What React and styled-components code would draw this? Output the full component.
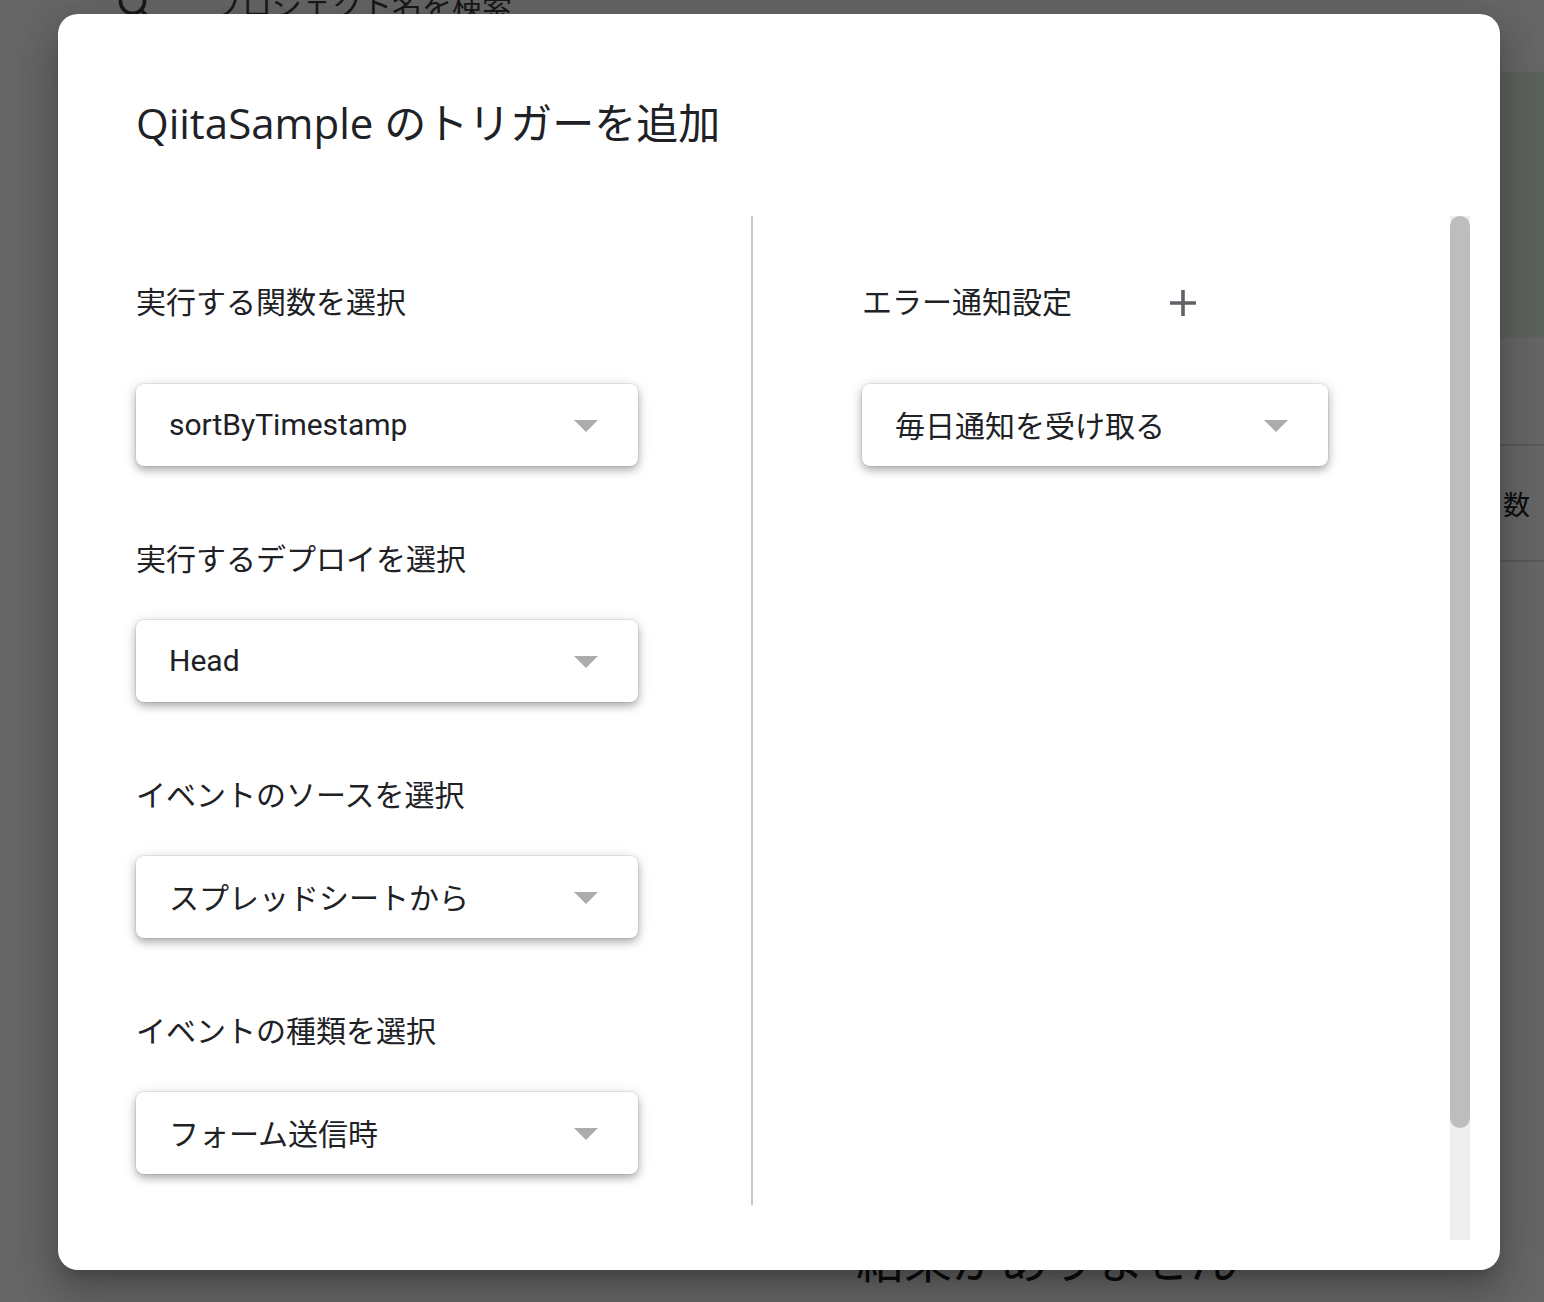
import React from "react";
import styled, { createGlobalStyle } from "styled-components";
import { Search } from "lucide-react";

const GlobalStyle = createGlobalStyle`
  html, body { margin: 0; padding: 0; }
  body {
    font-family: Roboto, "Noto Sans CJK JP", sans-serif;
    overflow: hidden;
    width: 1544px;
    height: 1302px;
    -webkit-font-smoothing: antialiased;
  }
  * { box-sizing: border-box; }
`;

/* ---------- underlying page (behind the scrim) ---------- */
const Page = styled.div`
  position: fixed;
  inset: 0;
  background: #ffffff;
  display: flex;
  flex-direction: column;
  overflow: hidden;
`;

const SearchRow = styled.div`
  flex-shrink: 0;
  display: flex;
  align-items: center;
  height: 60px;
  margin-top: -27px;
  padding-left: 116px;
  gap: 60px;
  color: #3c4043;
  font-size: 30px;
`;

const Workspace = styled.div`
  flex: 1;
  display: flex;
`;

const SideNav = styled.div`
  width: 800px;
  flex-shrink: 0;
`;

const Main = styled.div`
  flex: 1;
  display: flex;
  flex-direction: column;
`;

const Banner = styled.div`
  flex-shrink: 0;
  margin-top: 39px;
  height: 266px;
  background: #e6f4ea;
`;

const TableHead = styled.div`
  flex-shrink: 0;
  margin-top: 106px;
  height: 118px;
  border-top: 2px solid #dadce0;
  border-bottom: 2px solid #dadce0;
  display: flex;
  align-items: center;
  justify-content: flex-end;
  padding-right: 14px;
  font-size: 27px;
  color: #202124;
`;

const Empty = styled.div`
  flex-shrink: 0;
  margin-top: 676px;
  padding-left: 56px;
  font-size: 48px;
  line-height: 48px;
  color: #202124;
  white-space: nowrap;
`;

/* ---------- scrim + dialog ---------- */
const Scrim = styled.div`
  position: fixed;
  inset: 0;
  background: rgba(0, 0, 0, 0.6);
  display: flex;
  padding: 14px 44px 32px 58px;
`;

const Dialog = styled.div`
  flex: 1;
  min-height: 0;
  background: #ffffff;
  border-radius: 20px;
  display: flex;
  flex-direction: column;
  overflow: hidden;
  box-shadow: 0 11px 15px -7px rgba(0, 0, 0, 0.2),
    0 24px 38px 3px rgba(0, 0, 0, 0.14), 0 9px 46px 8px rgba(0, 0, 0, 0.12);
`;

const Title = styled.h1`
  margin: 0;
  padding: 83px 78px 0;
  font-family: "Open Sans", "Noto Sans CJK JP", sans-serif;
  font-weight: 400;
  font-size: 42px;
  line-height: 52px;
  color: #202124;
  white-space: nowrap;
`;

const Body = styled.div`
  flex: 1;
  min-height: 0;
  margin: 67px 30px 30px 0;
  display: flex;
`;

const ScrollArea = styled.div`
  flex: 1;
  min-width: 0;
  overflow: hidden;
  padding-left: 78px;
`;

const ScrollTrack = styled.div`
  width: 20px;
  flex-shrink: 0;
  background: #eeeeee;
  display: flex;
  flex-direction: column;
`;

const ScrollThumb = styled.div`
  height: ${(p) => p.$size}%;
  background: #bdbdbd;
  border-radius: 10px;
`;

const Columns = styled.div`
  display: flex;
  height: 989px;
`;

const LeftCol = styled.div`
  width: 615px;
  flex-shrink: 0;
  padding-top: 67px;
  display: flex;
  flex-direction: column;
`;

const Divider = styled.div`
  width: 2px;
  flex-shrink: 0;
  background: #c6c6c6;
`;

const RightCol = styled.div`
  padding-left: 109px;
  padding-top: 67px;
  display: flex;
  flex-direction: column;
`;

const Field = styled.div`
  display: flex;
  flex-direction: column;
  & + & {
    margin-top: 74px;
  }
`;

const LabelRow = styled.div`
  display: flex;
  align-items: center;
  height: 40px;
`;

const Label = styled.div`
  font-size: 30px;
  line-height: 40px;
  color: #202124;
  white-space: nowrap;
`;

const PlusButton = styled.button`
  margin-left: 96px;
  padding: 0;
  border: none;
  background: transparent;
  width: 30px;
  height: 30px;
  display: flex;
  align-items: center;
  justify-content: center;
  cursor: pointer;
`;

const Select = styled.div`
  margin-top: ${(p) => p.$gap}px;
  width: ${(p) => p.$width}px;
  height: 82px;
  display: flex;
  align-items: center;
  justify-content: space-between;
  padding: 0 40px 2px 33px;
  background: #ffffff;
  border-radius: 8px;
  box-shadow: 0 0 0 1px rgba(0, 0, 0, 0.06), 0 4px 8px rgba(0, 0, 0, 0.28),
    0 2px 16px rgba(0, 0, 0, 0.1);
  font-size: 30px;
  color: #202124;
  white-space: nowrap;
`;

const Arrow = styled.span`
  width: 0;
  height: 0;
  border-left: 12px solid transparent;
  border-right: 12px solid transparent;
  border-top: 12px solid #acacac;
  margin-top: 4px;
`;

function Dropdown({ value, width = 502, gap = 40 }) {
  return (
    <Select $width={width} $gap={gap}>
      <span>{value}</span>
      <Arrow />
    </Select>
  );
}

function PlusIcon() {
  return (
    <svg width="28" height="28" viewBox="0 0 28 28" aria-hidden="true">
      <path
        d="M14 1v26M1 14h26"
        stroke="#5f6368"
        strokeWidth="3.6"
        fill="none"
      />
    </svg>
  );
}

export default function App() {
  return (
    <>
      <GlobalStyle />
      <Page>
        <SearchRow>
          <Search size={36} strokeWidth={2.4} />
          <span>プロジェクト名を検索</span>
        </SearchRow>
        <Workspace>
          <SideNav />
          <Main>
            <Banner />
            <TableHead>数</TableHead>
            <Empty>結果がありません</Empty>
          </Main>
        </Workspace>
      </Page>
      <Scrim>
        <Dialog role="dialog" aria-label="QiitaSample のトリガーを追加">
          <Title>QiitaSample のトリガーを追加</Title>
          <Body>
            <ScrollArea>
              <Columns>
                <LeftCol>
                  <Field>
                    <Label>実行する関数を選択</Label>
                    <Dropdown value="sortByTimestamp" gap={61} />
                  </Field>
                  <Field>
                    <Label>実行するデプロイを選択</Label>
                    <Dropdown value="Head" />
                  </Field>
                  <Field>
                    <Label>イベントのソースを選択</Label>
                    <Dropdown value="スプレッドシートから" />
                  </Field>
                  <Field>
                    <Label>イベントの種類を選択</Label>
                    <Dropdown value="フォーム送信時" />
                  </Field>
                </LeftCol>
                <Divider />
                <RightCol>
                  <Field>
                    <LabelRow>
                      <Label>エラー通知設定</Label>
                      <PlusButton aria-label="追加">
                        <PlusIcon />
                      </PlusButton>
                    </LabelRow>
                    <Dropdown value="毎日通知を受け取る" width={466} gap={61} />
                  </Field>
                </RightCol>
              </Columns>
            </ScrollArea>
            <ScrollTrack>
              <ScrollThumb $size={(912 / 1024) * 100} />
            </ScrollTrack>
          </Body>
        </Dialog>
      </Scrim>
    </>
  );
}
